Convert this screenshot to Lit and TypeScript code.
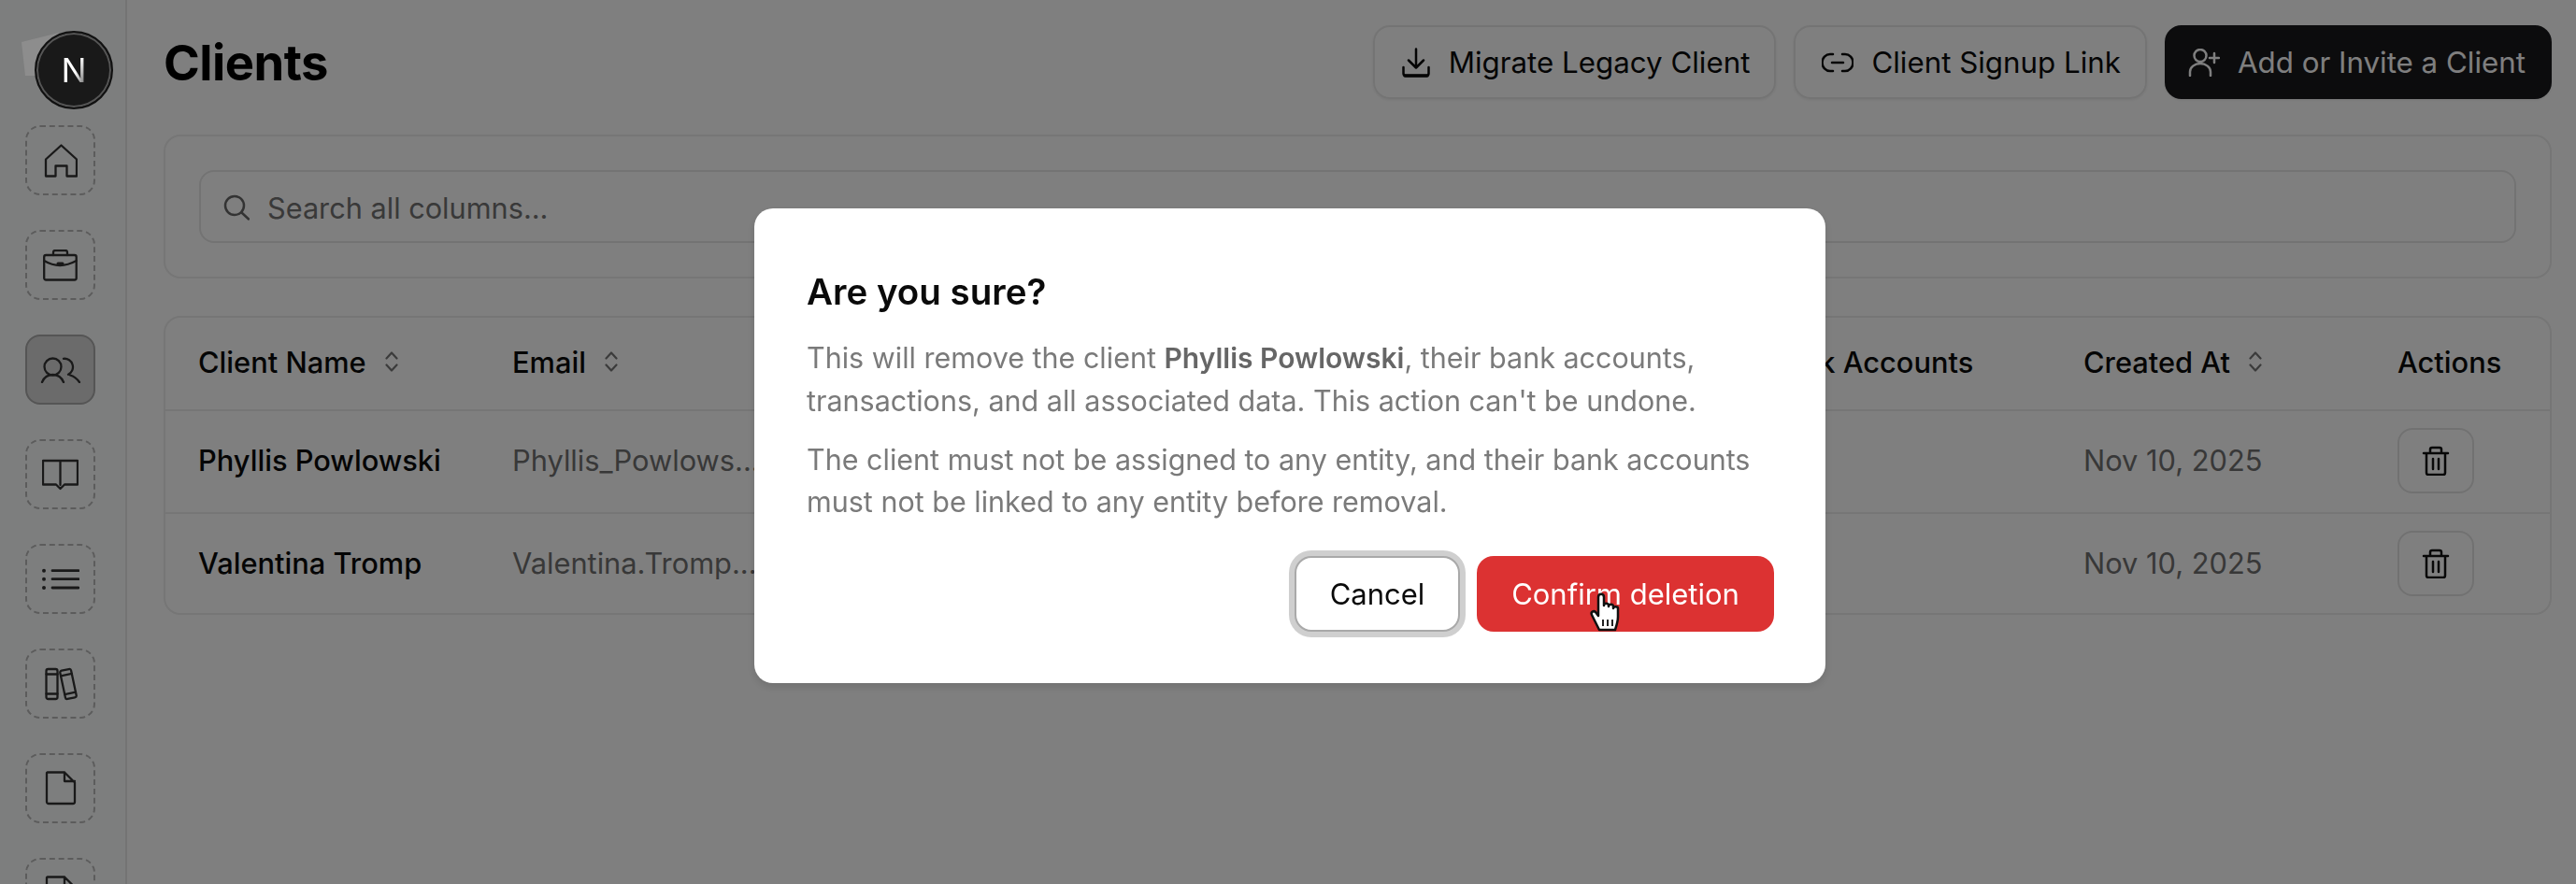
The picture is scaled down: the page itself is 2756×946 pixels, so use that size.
import {LitElement, html, css, svg} from 'lit';
import {customElement, property} from 'lit/decorators.js';

const sortIcon = html`<svg class="sort" width="14" height="22" viewBox="0 0 14 22"><path d="M1.5 7.5 7 1.5l5.500 6M1.500 14.500 7 20.500l5.500-6"/></svg>`;

const fileIcon = svg`<path d="M3.500 1.500H22L33 12.500V33a2 2 0 0 1-2 2H5a2 2 0 0 1-2-2V2ZM22 1.500V11H33"/>`;

const navIcons = [
  {w: 36, h: 36, body: svg`<path d="M2 34.500V16.500L18.500 1.500 35 16.500V34.500H24.500V23.500H12.500V34.500Z"/>`},
  {w: 37, h: 34, body: svg`<rect x="1.200" y="6" width="34.500" height="26.500" rx="2"/><path d="M11 6V3a2 2 0 0 1 2-2h11a2 2 0 0 1 2 2v3M1.200 12c5 3 11 5 17 5s12-2 17.500-5"/><path d="M16 15h5" stroke-width="3"/>`},
  {w: 44, h: 28, body: svg`<circle cx="13.500" cy="10.500" r="9"/><path d="M2 27c2-5 6-8 11.500-8s9.500 3 11.500 8M25 1.800a9 9 0 0 1 5 17M32 19.500c4 1 7.500 4 10 7.500"/>`},
  {w: 39, h: 34, body: svg`<path d="M19.500 2V28M19.500 2H38V27.500H24L19.500 32 15 27.500H1V2Z"/>`},
  {w: 40, h: 24, body: svg`<path d="M11 2.700H39M11 11.700H39M11 21H39" stroke-width="2.800"/><circle class="dot" cx="2" cy="2.700" r="2"/><circle class="dot" cx="2" cy="11.700" r="2"/><circle class="dot" cx="2" cy="21" r="2"/>`},
  {w: 36, h: 36, body: svg`<rect x="2.500" y="2" width="12" height="32" rx="2"/><path d="M2.500 7.500h12M2.500 28.500h12"/><g transform="rotate(-12 26 18)"><rect x="20" y="2.500" width="12" height="31" rx="2"/><path d="M20 8h12M20 28h12"/></g>`},
  {w: 36, h: 37, body: fileIcon},
  {w: 36, h: 37, body: fileIcon},
];

const clients = [
  {name: 'Phyllis Powlowski', email: 'Phyllis_Powlows...', created: 'Nov 10, 2025'},
  {name: 'Valentina Tromp', email: 'Valentina.Tromp...', created: 'Nov 10, 2025'},
];

@customElement('confirm-dialog')
export class ConfirmDialog extends LitElement {
  static styles = css`
    :host {
      position: absolute;
      inset: 0;
      background: rgba(0, 0, 0, 0.5);
      backdrop-filter: blur(0.7px);
      display: flex;
      align-items: center;
      justify-content: center;
      padding: 8px 0 0 4px;
      box-sizing: border-box;
      font-family: Inter, sans-serif;
    }
    .modal {
      width: 1146px;
      height: 508px;
      box-sizing: border-box;
      background: #fff;
      border-radius: 20px;
      padding: 66px 55px 0 56px;
      display: flex;
      flex-direction: column;
      box-shadow: 0 4px 10px rgba(0, 0, 0, 0.12);
    }
    h2 {
      margin: 0 0 25px;
      font-size: 38.500px;
      line-height: 46px;
      font-weight: 600;
      color: #0a0a0a;
    }
    p {
      margin: 0 0 18px;
      font-size: 30.500px;
      line-height: 45px;
      color: #7a7a7a;
      white-space: nowrap;
    }
    b { font-weight: 600; color: #666; font-size: 30px; }
    .buttons {
      display: flex;
      justify-content: flex-end;
      gap: 18px;
      margin-top: 18px;
    }
    .btn {
      height: 81px;
      box-sizing: border-box;
      border-radius: 18px;
      font-size: 31px;
      font-weight: 400;
      display: flex;
      align-items: center;
      justify-content: center;
    }
    .cancel {
      width: 177px;
      background: #fff;
      color: #0a0a0a;
      border: 2px solid #a9a9a9;
      box-shadow: 0 0 0 6px #cfcfcf;
    }
    .danger { width: 318px; background: #dc3232; color: #fff; }
  `;

  render() {
    return html`
      <div class="modal">
        <h2>Are you sure?</h2>
        <p>This will remove the client <b>Phyllis Powlowski</b>, their bank accounts,<br>transactions, and all associated data. This action can't be undone.</p>
        <p>The client must not be assigned to any entity, and their bank accounts<br>must not be linked to any entity before removal.</p>
        <div class="buttons">
          <div class="btn cancel">Cancel</div>
          <div class="btn danger">Confirm deletion</div>
        </div>
      </div>`;
  }
}

@customElement('app-root')
export class AppRoot extends LitElement {
  static styles = css`
    :host {
      display: block;
      position: relative;
      width: 2756px;
      height: 946px;
      overflow: hidden;
      background: #fff;
      color: #0a0a0a;
      font-family: Inter, sans-serif;
    }
    .layout { display: flex; height: 100%; }

    /* sidebar */
    aside {
      width: 136px;
      flex: none;
      box-sizing: border-box;
      background: #fbfdfd;
      border-right: 2px solid #e9e9e9;
      padding: 134px 0 0 27px;
      display: flex;
      flex-direction: column;
      gap: 37px;
    }
    .nav {
      width: 75px;
      height: 75px;
      flex: none;
      box-sizing: border-box;
      border: 2px dashed #b8b8b8;
      border-radius: 16px;
      display: flex;
      align-items: center;
      justify-content: center;
    }
    .nav.active { background: #d6d6d6; border: 2px solid #aaa; }
    .nav svg { fill: none; stroke: #333; stroke-width: 2.300; stroke-linejoin: round; stroke-linecap: round; }
    .nav .dot { fill: #333; stroke: none; }

    /* main */
    main { flex: 1; min-width: 0; padding: 27px 26px 0 39px; }
    header { display: flex; align-items: center; gap: 19px; }
    h1 { margin: 0 auto 0 0; font-size: 52.500px; font-weight: 700; letter-spacing: -0.5px; color: #000; }
    .action {
      height: 79px;
      box-sizing: border-box;
      border: 2px solid #e9e9e9;
      border-radius: 18px;
      padding: 0 26px 0 28px;
      display: flex;
      align-items: center;
      gap: 19px;
      font-size: 31.300px;
      font-weight: 400;
      white-space: nowrap;
      box-shadow: 0 1px 3px rgba(0, 0, 0, 0.08);
    }
    .action svg { flex: none; fill: none; stroke: currentColor; stroke-width: 2.500; stroke-linecap: round; stroke-linejoin: round; }
    .action.primary { background: #18181b; border-color: #18181b; color: #fff; padding-left: 23px; }

    .card {
      border: 2px solid #ececec;
      border-radius: 18px;
      box-sizing: border-box;
    }
    .filters { margin-top: 38px; height: 154px; padding: 36px; }
    .search {
      height: 78px;
      box-sizing: border-box;
      border: 2px solid #e6e6e6;
      border-radius: 16px;
      padding: 2px 0 0 24px;
      display: flex;
      align-items: center;
      gap: 19px;
      font-size: 30.700px;
      color: #737373;
    }
    .search svg { fill: none; stroke: #666; stroke-width: 2.500; stroke-linecap: round; }

    .table { margin-top: 40px; height: 320px; }
    .row {
      display: grid;
      grid-template-columns: 336px 1342px 339px 336px 1fr;
      padding: 0 0 3px 35px;
      align-items: center;
      height: 110px;
      box-sizing: border-box;
      font-size: 30.800px;
      border-bottom: 2px solid #ececec;
    }
    .row:last-child { border-bottom: none; height: 108px; }
    .row.head { height: 100px; font-weight: 500; padding-bottom: 4px; }
    .th { display: flex; align-items: center; gap: 20px; }
    .sort { fill: none; stroke: #777; stroke-width: 2.200; stroke-linecap: round; stroke-linejoin: round; }
    .name { font-weight: 500; }
    .muted { color: #717171; }
    .trash {
      width: 82px;
      height: 70px;
      box-sizing: border-box;
      border: 2px solid #e3e3e3;
      border-radius: 16px;
      display: flex;
      align-items: center;
      justify-content: center;
    }
    .trash svg { fill: none; stroke: #111; stroke-width: 2.500; stroke-linecap: round; stroke-linejoin: round; }

    /* these two sit above the backdrop */
    .corner {
      position: absolute;
      left: 23px;
      top: 35px;
      width: 40px;
      height: 46px;
      background: #8d8d8d;
      clip-path: polygon(0 22%, 100% 0, 100% 100%, 10% 100%);
    }
    .indicator {
      position: absolute;
      left: 37px;
      top: 33px;
      width: 84px;
      height: 84px;
      box-sizing: border-box;
      border-radius: 50%;
      background: #191919;
      border: 2px solid #111;
      box-shadow: inset 0 0 0 2px #555;
      display: flex;
      align-items: center;
      justify-content: center;
    }
    .indicator span {
      font-size: 36px;
      font-weight: 400;
      line-height: 1;
      background: linear-gradient(115deg, #fff 55%, #8a8a8a 85%);
      -webkit-background-clip: text;
      background-clip: text;
      color: transparent;
    }
    .cursor { position: absolute; left: 1700px; top: 634px; }
  `;

  @property({type: Array}) rows = clients;

  render() {
    return html`
      <div class="layout">
        <aside>
          ${navIcons.map((ic, i) => html`
            <div class="nav ${i === 2 ? 'active' : ''}">
              <svg width=${ic.w} height=${ic.h} viewBox="0 0 ${ic.w} ${ic.h}">${ic.body}</svg>
            </div>`)}
        </aside>
        <main>
          <header>
            <h1>Clients</h1>
            <div class="action">
              <svg width="32" height="32" viewBox="0 0 32 32"><path d="M16 1.500V21M8 13.500l8 8 8-8M2.500 21v6.500a2.500 2.500 0 0 0 2.500 2.500h22a2.500 2.500 0 0 0 2.500-2.500V21"/><path d="M4 30h24" stroke-width="3.500"/></svg>
              Migrate Legacy Client
            </div>
            <div class="action">
              <svg width="34" height="22" viewBox="0 0 34 22"><path d="M12 2H9a8.500 9 0 0 0 0 18h3M22 2h3a8.500 9 0 0 1 0 18h-3M11 11h12"/></svg>
              Client Signup Link
            </div>
            <div class="action primary">
              <svg width="34" height="30" viewBox="0 0 34 30"><circle cx="13" cy="7.500" r="6.500"/><path d="M2 29v-4a11 9 0 0 1 22 0v4M28 5v10M23 10h10" /></svg>
              Add or Invite a Client
            </div>
          </header>

          <div class="card filters">
            <div class="search">
              <svg width="28" height="28" viewBox="0 0 28 28"><circle cx="12" cy="12" r="10"/><path d="M19.500 19.500 27 26.500"/></svg>
              Search all columns...
            </div>
          </div>

          <div class="card table">
            <div class="row head">
              <div class="th">Client Name ${sortIcon}</div>
              <div class="th">Email ${sortIcon}</div>
              <div class="th">Bank Accounts</div>
              <div class="th">Created At ${sortIcon}</div>
              <div class="th">Actions</div>
            </div>
            ${this.rows.map(c => html`
              <div class="row">
                <div class="name">${c.name}</div>
                <div class="muted">${c.email}</div>
                <div></div>
                <div class="muted">${c.created}</div>
                <div class="trash">
                  <svg width="30" height="32" viewBox="0 0 30 32"><path d="M2 8h26M9 8V4a2 2 0 0 1 2-2h8a2 2 0 0 1 2 2v4M5 8v21a2 2 0 0 0 2 2h16a2 2 0 0 0 2-2V8M12 14v11M18 14v11"/></svg>
                </div>
              </div>`)}
          </div>
        </main>
      </div>

      <confirm-dialog></confirm-dialog>

      <div class="corner"></div>
      <div class="indicator"><span>N</span></div>
      <svg class="cursor" width="36" height="42" viewBox="0 0 36 42">
        <path d="M11 40 3 24c-1.500-3 2-5 4-3l3 4V5c0-4.500 6-4.500 6 0v9c0-3 5-3 5 0v1c0-3 5-3 5 0v2c0-2.500 5-2.500 5 0v9c0 5-1 8-3 14Z" fill="#fff" stroke="#111" stroke-width="2.500" stroke-linejoin="round"/>
        <path d="M15 29v7M20 29v7M25 29v7" stroke="#222" stroke-width="2" fill="none"/>
      </svg>`;
  }
}
